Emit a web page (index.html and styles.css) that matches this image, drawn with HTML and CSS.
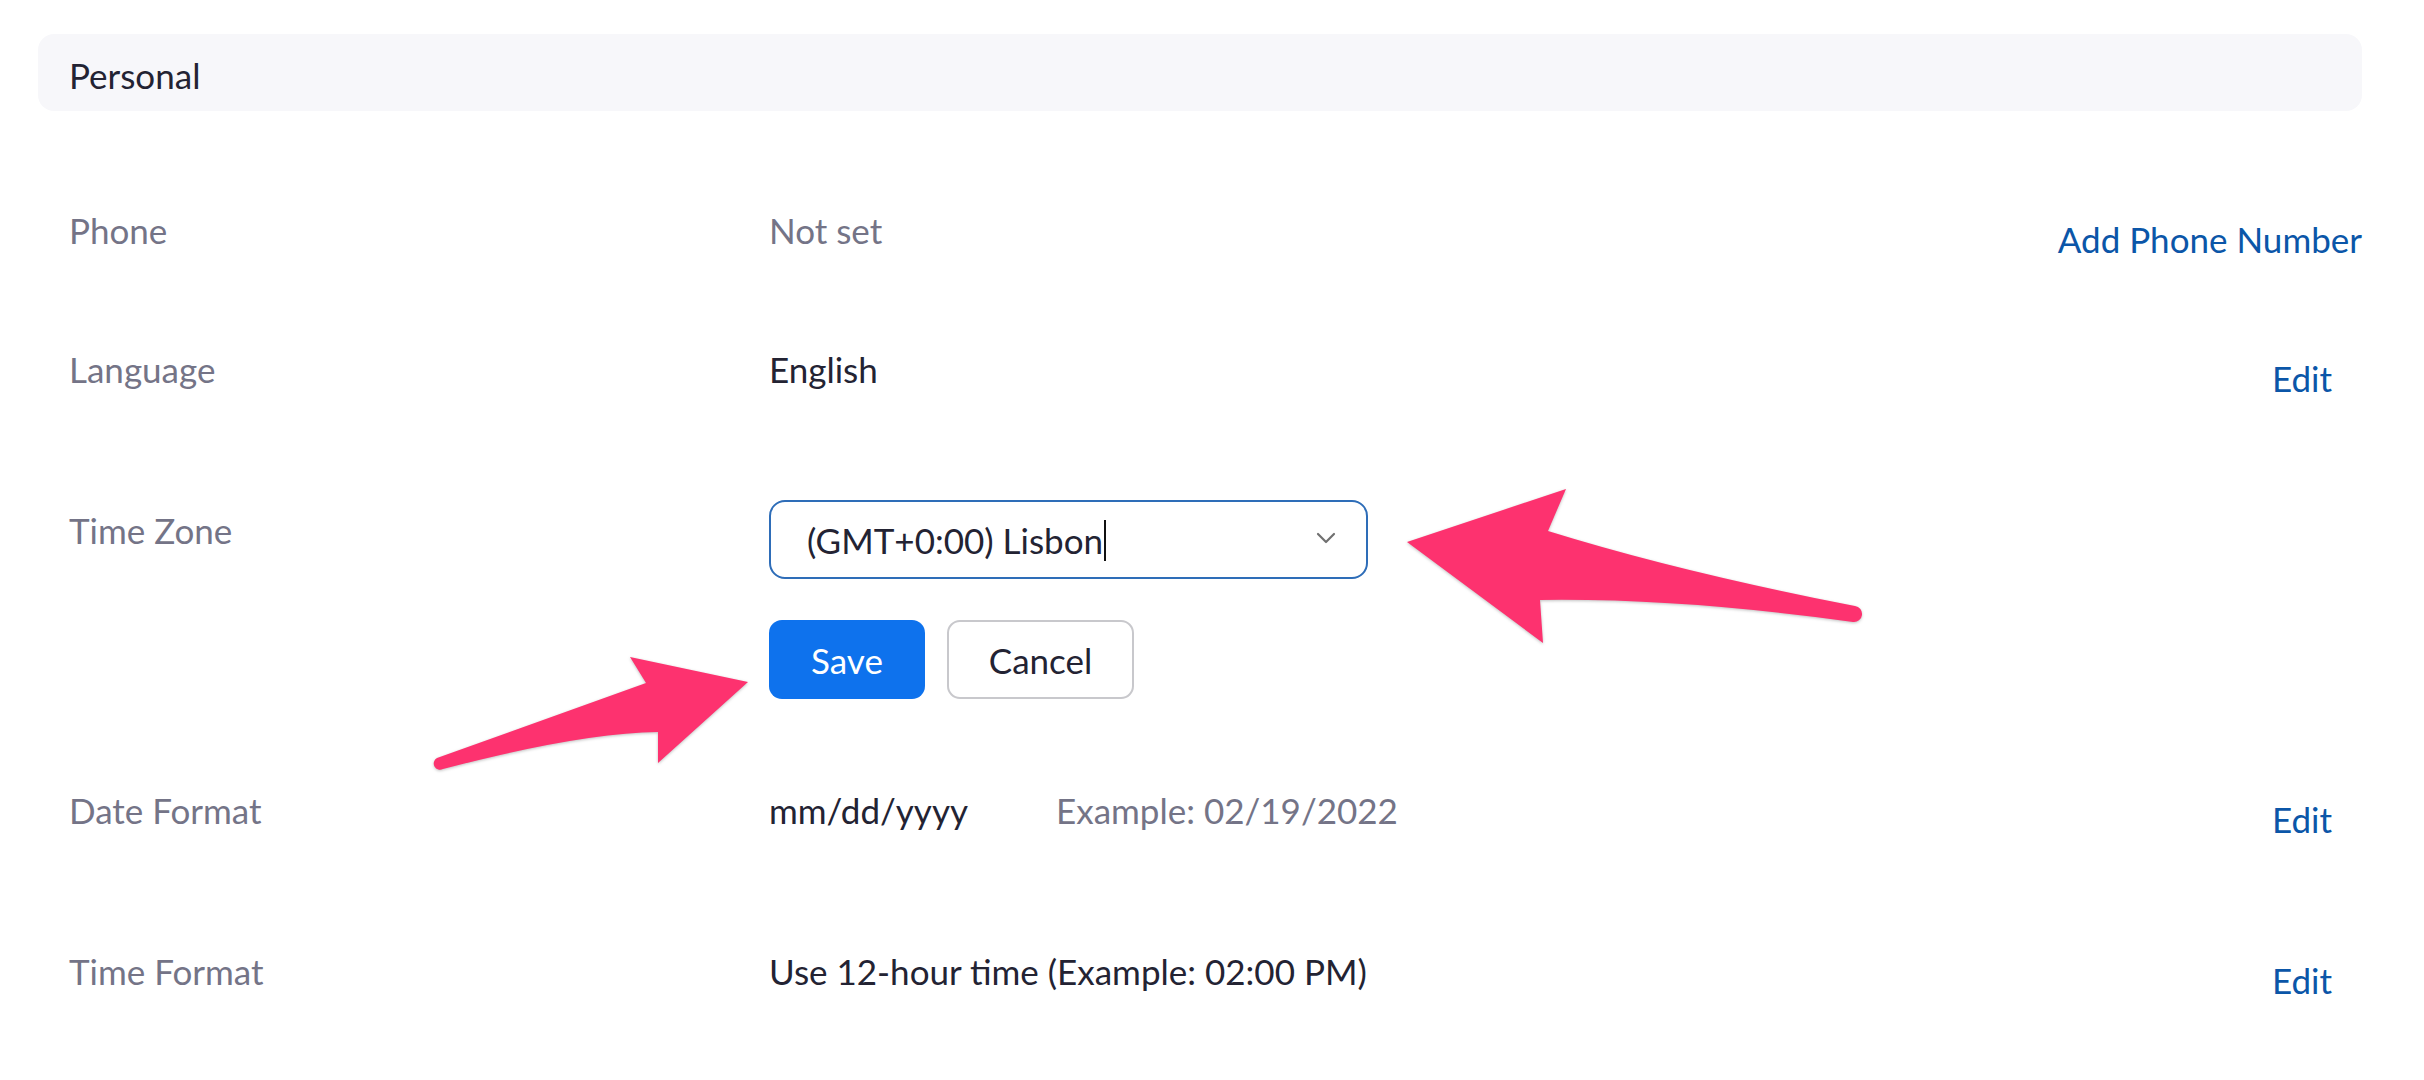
FILE: index.html
```html
<!DOCTYPE html>
<html lang="en">
<head>
<meta charset="utf-8">
<title>Personal</title>
<link rel="stylesheet" href="styles.css">
</head>
<body>
<div class="panel">
  <div class="section-head">Personal</div>
  <div class="rows">
    <div class="row row-phone">
      <div class="label">Phone</div>
      <div class="value muted">Not set</div>
      <a class="action action-wide" href="#">Add Phone Number</a>
    </div>
    <div class="row row-lang">
      <div class="label">Language</div>
      <div class="value">English</div>
      <a class="action" href="#">Edit</a>
    </div>
    <div class="row row-tz">
      <div class="label label-tz">Time Zone</div>
      <div class="value">
        <div class="select">
          <span class="select-text">(GMT+0:00) Lisbon</span><span class="caret"></span>
          <svg class="chevron" width="20" height="12" viewBox="0 0 20 12"><path d="M2 2 L10 10 L18 2" fill="none" stroke="#707070" stroke-width="2.2" stroke-linecap="round" stroke-linejoin="round"/></svg>
        </div>
        <div class="buttons">
          <button class="btn btn-primary">Save</button>
          <button class="btn btn-default">Cancel</button>
        </div>
      </div>
      <div></div>
    </div>
    <div class="row row-date">
      <div class="label">Date Format</div>
      <div class="value date-value"><span class="fmt">mm/dd/yyyy</span><span class="muted">Example: 02/19/2022</span></div>
      <a class="action" href="#">Edit</a>
    </div>
    <div class="row row-time">
      <div class="label">Time Format</div>
      <div class="value">Use 12-hour time (Example: 02:00 PM)</div>
      <a class="action" href="#">Edit</a>
    </div>
  </div>
</div>
<svg class="annotations" width="2424" height="1080" viewBox="0 0 2424 1080">
  <path d="M1407,542 L1566,489 L1548,531 Q1680,572 1855,606 A8,8 0 0 1 1853,622 Q1680,598 1540,600 L1543,643 Z" fill="#fd326f"/>
  <path d="M748,682 L630,657 L646,683 L437,758 A6,6 0 0 0 443,769 Q580,733 658,732 L658,763 Z" fill="#fd326f"/>
</svg>
</body>
</html>
```
FILE: styles.css
```css
html, body {
  margin: 0;
  padding: 0;
  background: #ffffff;
}
body {
  font-family: Lato, "Open Sans", "Liberation Sans", sans-serif;
  font-size: 35px;
  line-height: 40px;
  color: #232333;
  width: 2424px;
  height: 1080px;
  overflow: hidden;
  position: relative;
}
.panel {
  margin: 0 62px 0 38px;
}
.section-head {
  margin-top: 34px;
  height: 77px;
  box-sizing: border-box;
  padding: 4px 0 0 31px;
  border-radius: 16px;
  background: #f7f7fa;
  display: flex;
  align-items: center;
  color: #232333;
}
.rows {
  padding: 99px 0 0 31px;
}
.row {
  display: grid;
  grid-template-columns: 700px 1fr auto;
  align-items: start;
}
.row-lang { margin-top: 90px; }
.row-tz { margin-top: 102px; }
.row-date { margin-top: 91px; }
.row-time { margin-top: 112px; }
.label {
  color: #747487;
}
.label-tz {
  padding-top: 10px;
}
.muted {
  color: #747487;
}
.action {
  color: #0b56a8;
  text-decoration: none;
  padding-top: 9px;
  margin-right: 30px;
}
.action-wide {
  margin-right: 0;
}
.select {
  width: 599px;
  height: 79px;
  box-sizing: border-box;
  border: 2px solid #2e6db8;
  border-radius: 16px;
  display: flex;
  align-items: center;
  padding: 0 30px 0 36px;
}
.select-text {
  color: #232333;
}
.caret {
  display: inline-block;
  width: 2px;
  height: 41px;
  background: #111;
  margin-left: 1px;
  position: relative;
  top: 1px;
}
.chevron {
  margin-left: auto;
  position: relative;
  top: -2px;
}
.buttons {
  display: flex;
  gap: 22px;
  margin-top: 41px;
}
.btn {
  font-family: inherit;
  font-size: 35px;
  line-height: 40px;
  height: 79px;
  border-radius: 13px;
  padding: 0;
  box-sizing: border-box;
  cursor: pointer;
}
.btn-primary {
  width: 156px;
  background: #0e72ed;
  color: #ffffff;
  border: 0;
}
.btn-default {
  width: 187px;
  background: #ffffff;
  color: #232333;
  border: 2px solid #c8c8cc;
}
.date-value {
  display: flex;
  gap: 88px;
}
.annotations {
  position: absolute;
  left: 0;
  top: 0;
  pointer-events: none;
  filter: drop-shadow(0 1px 1.5px rgba(0, 0, 0, 0.25));
}
```
